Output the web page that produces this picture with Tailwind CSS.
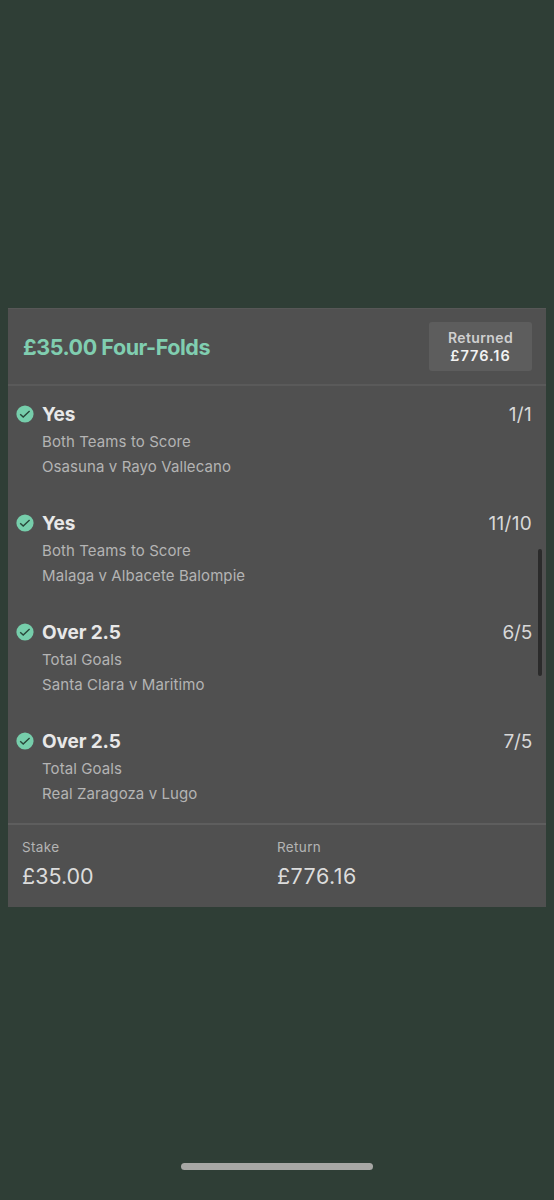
<!DOCTYPE html>
<html lang="en">
<head>
    <meta charset="UTF-8">
    <meta name="viewport" content="width=device-width, initial-scale=1.0">
    <script src="https://cdn.jsdelivr.net/npm/@tailwindcss/browser@4"></script>
    <title>My Bets</title>
</head>
<body class="bg-[#2f3e36] h-[1200px] overflow-hidden font-['Inter',sans-serif] flex flex-col items-center">
    <!-- Bet card -->
    <main class="relative mt-[308px] w-[538px] h-[599px] bg-[#505050] border-t border-[#575757] whitespace-nowrap">
        <!-- Header -->
        <header class="flex items-center justify-between h-[77px] px-[14px] border-b-2 border-[#5a5a5a]">
            <h1 class="pl-px text-[21.5px] leading-[30px] font-bold text-[#80ceb0] tracking-[-0.45px]">£35.00 Four-Folds</h1>
            <div class="flex flex-col items-center justify-center w-[103px] h-[49px] rounded-[3px] bg-[#5d5d5d] leading-[17.5px] font-semibold">
                <span class="text-[14px] text-[#cfcfcf] tracking-[0.4px]">Returned</span>
                <span class="text-[14.5px] text-[#f2f2f2] tracking-[1px]">£776.16</span>
            </div>
        </header>

        <!-- Selections -->
        <ul class="pt-px">
            <li class="h-[109px] pt-3 pl-2 pr-[14px] flex items-start">
                <svg class="w-[18px] h-[18px] mt-[6px] mr-2 shrink-0" viewBox="0 0 18 18" fill="none">
                    <circle cx="9" cy="9" r="8.6" fill="#76ceab" />
                    <path d="M4.2 9.2l3 2.9 6.4-6.2" stroke="#29473a" stroke-width="1.4" />
                </svg>
                <div class="grow">
                    <div class="flex justify-between pt-px leading-[29px]">
                        <span class="text-[19px] leading-[30px] -mb-px font-bold text-[#e8e8e8] tracking-[-0.2px]">Yes</span>
                        <span class="text-[19px] leading-[30px] -mb-px text-[#d8d8d8] tracking-[0.3px]">1/1</span>
                    </div>
                    <p class="text-[15px] leading-[25px] text-[#b4b4b4] tracking-[0.09px]">Both Teams to Score</p>
                    <p class="text-[15px] leading-[25px] text-[#b4b4b4] tracking-[0.09px]">Osasuna v Rayo Vallecano</p>
                </div>
            </li>
            <li class="h-[109px] pt-3 pl-2 pr-[14px] flex items-start">
                <svg class="w-[18px] h-[18px] mt-[6px] mr-2 shrink-0" viewBox="0 0 18 18" fill="none">
                    <circle cx="9" cy="9" r="8.6" fill="#76ceab" />
                    <path d="M4.2 9.2l3 2.9 6.4-6.2" stroke="#29473a" stroke-width="1.4" />
                </svg>
                <div class="grow">
                    <div class="flex justify-between pt-px leading-[29px]">
                        <span class="text-[19px] leading-[30px] -mb-px font-bold text-[#e8e8e8] tracking-[-0.2px]">Yes</span>
                        <span class="text-[19px] leading-[30px] -mb-px text-[#d8d8d8] tracking-[0.3px]">11/10</span>
                    </div>
                    <p class="text-[15px] leading-[25px] text-[#b4b4b4] tracking-[0.09px]">Both Teams to Score</p>
                    <p class="text-[15px] leading-[25px] text-[#b4b4b4] tracking-[0.09px]">Malaga v Albacete Balompie</p>
                </div>
            </li>
            <li class="h-[109px] pt-3 pl-2 pr-[14px] flex items-start">
                <svg class="w-[18px] h-[18px] mt-[6px] mr-2 shrink-0" viewBox="0 0 18 18" fill="none">
                    <circle cx="9" cy="9" r="8.6" fill="#76ceab" />
                    <path d="M4.2 9.2l3 2.9 6.4-6.2" stroke="#29473a" stroke-width="1.4" />
                </svg>
                <div class="grow">
                    <div class="flex justify-between pt-px leading-[29px]">
                        <span class="text-[19px] leading-[30px] -mb-px font-bold text-[#e8e8e8] tracking-[-0.1px]">Over 2.5</span>
                        <span class="text-[19px] leading-[30px] -mb-px text-[#d8d8d8] tracking-[-0.2px]">6/5</span>
                    </div>
                    <p class="text-[15px] leading-[25px] text-[#b4b4b4] tracking-[0.09px]">Total Goals</p>
                    <p class="text-[15px] leading-[25px] text-[#b4b4b4] tracking-[0.09px]">Santa Clara v Maritimo</p>
                </div>
            </li>
            <li class="h-[109px] pt-3 pl-2 pr-[14px] flex items-start">
                <svg class="w-[18px] h-[18px] mt-[6px] mr-2 shrink-0" viewBox="0 0 18 18" fill="none">
                    <circle cx="9" cy="9" r="8.6" fill="#76ceab" />
                    <path d="M4.2 9.2l3 2.9 6.4-6.2" stroke="#29473a" stroke-width="1.4" />
                </svg>
                <div class="grow">
                    <div class="flex justify-between pt-px leading-[29px]">
                        <span class="text-[19px] leading-[30px] -mb-px font-bold text-[#e8e8e8] tracking-[-0.1px]">Over 2.5</span>
                        <span class="text-[19px] leading-[30px] -mb-px text-[#d8d8d8] tracking-[-0.2px]">7/5</span>
                    </div>
                    <p class="text-[15px] leading-[25px] text-[#b4b4b4] tracking-[0.09px]">Total Goals</p>
                    <p class="text-[15px] leading-[25px] text-[#b4b4b4] tracking-[0.09px]">Real Zaragoza v Lugo</p>
                </div>
            </li>
        </ul>

        <!-- Totals -->
        <footer class="grid grid-cols-[255px_1fr] pl-[14px] pt-[12px] border-t-2 border-[#5e5e5e]">
            <div>
                <p class="text-[13.5px] leading-[20px] text-[#b4b4b4] tracking-[0.35px]">Stake</p>
                <p class="mt-1 text-[21.5px] leading-[30px] text-[#dcdcdc]">£35.00</p>
            </div>
            <div>
                <p class="text-[13.5px] leading-[20px] text-[#b4b4b4] tracking-[0.35px]">Return</p>
                <p class="mt-1 text-[21.5px] leading-[30px] text-[#dcdcdc] tracking-[0.45px]">£776.16</p>
            </div>
        </footer>

        <!-- Scroll indicator -->
        <div class="absolute right-1 top-[240px] w-[4px] h-[127px] rounded-full bg-[#2b2b2b]"></div>
    </main>

    <!-- Home indicator -->
    <div class="mt-[256px] w-[192px] h-[7px] shrink-0 rounded-full bg-[#a7a7a5]"></div>
</body>
</html>
